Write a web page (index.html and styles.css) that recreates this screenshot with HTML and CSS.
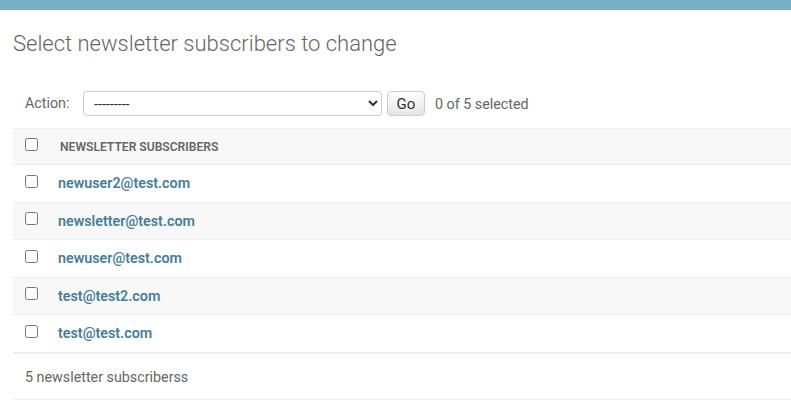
FILE: index.html
```html
<!DOCTYPE html>
<html>
<head>
<meta charset="utf-8">
<link rel="stylesheet" href="styles.css">
</head>
<body>
<div class="topbar"></div>
<div class="content">
  <h1 class="title">Select newsletter subscribers to change</h1>
  <div class="actions">
    <label class="action-label">Action:</label>
    <select class="action-select">
      <option>---------</option>
    </select>
    <button class="go-btn">Go</button>
    <span class="counter">0 of 5 selected</span>
  </div>
  <table class="results">
    <thead>
      <tr>
        <th class="cb-col"><input type="checkbox"></th>
        <th class="head-text">Newsletter subscribers</th>
      </tr>
    </thead>
    <tbody>
      <tr><td class="cb-col"><input type="checkbox"></td><td class="link-cell"><a href="#">newuser2@test.com</a></td></tr>
      <tr><td class="cb-col"><input type="checkbox"></td><td class="link-cell"><a href="#">newsletter@test.com</a></td></tr>
      <tr><td class="cb-col"><input type="checkbox"></td><td class="link-cell"><a href="#">newuser@test.com</a></td></tr>
      <tr><td class="cb-col"><input type="checkbox"></td><td class="link-cell"><a href="#">test@test2.com</a></td></tr>
      <tr><td class="cb-col"><input type="checkbox"></td><td class="link-cell"><a href="#">test@test.com</a></td></tr>
    </tbody>
  </table>
  <p class="paginator">5 newsletter subscriberss</p>
</div>
</body>
</html>
```
FILE: styles.css
```css
html, body {
  margin: 0;
  padding: 0;
  background: #fff;
  font-family: Roboto, "Liberation Sans", sans-serif;
  color: #333;
  font-size: 14.3px;
}
.topbar {
  height: 10px;
  background: #79aec8;
}
.content {
  padding: 21px 0 0 13px;
}
.title {
  margin: 0 0 34px 0;
  font-size: 22px;
  line-height: 26px;
  font-weight: 300;
  color: #666;
}
.actions {
  display: flex;
  align-items: center;
  padding: 0 0 12px 12px;
  color: #666;
  font-size: 14.3px;
  line-height: 25px;
}
.action-label {
  width: 58px;
}
.action-select {
  width: 299px;
  height: 25px;
  border: 1px solid #ccc;
  border-radius: 4px;
  background: #fff;
  font-family: Roboto, "Liberation Sans", sans-serif;
  font-size: 14.3px;
  color: #333;
  padding: 0 0 0 6px;
  margin: 0;
}
.go-btn {
  margin: 0 0 0 5px;
  height: 25px;
  width: 38px;
  padding: 0;
  border: 1px solid #ccc;
  border-radius: 4px;
  background: #fff;
  box-shadow: 0 -15px 20px -10px rgba(0,0,0,0.15) inset;
  font-family: Roboto, "Liberation Sans", sans-serif;
  font-size: 15px;
  color: #333;
}
.counter {
  margin-left: 10px;
  line-height: 24px;
}
.results {
  width: 100%;
  border-collapse: collapse;
}
.results thead th {
  background: #f8f8f8;
  border-top: 1px solid #eee;
  border-bottom: 1px solid #eee;
  height: 34px;
  padding: 0;
  text-align: left;
  vertical-align: middle;
}
.head-text {
  font-size: 12.1px;
  font-weight: 600;
  text-transform: uppercase;
  color: #666;
}
.results thead th.head-text {
  padding-left: 10px;
  padding-top: 1px;
}
.cb-col {
  width: 37px;
  box-sizing: border-box;
}
.cb-col input {
  margin: 0 0 0 4px;
  width: 13px;
  height: 13px;
  display: block;
}
.results .cb-col {
  padding: 0 0 0 8px;
}
.results thead th.cb-col input {
  margin-top: -4px;
}
.results tbody td {
  border-bottom: 1px solid #eee;
  padding: 10px 8px;
  height: 16.5px;
  line-height: 16.5px;
  font-size: 14.3px;
  vertical-align: middle;
}
.results tbody td.cb-col {
  padding: 0 0 0 8px;
}
.results tbody td.cb-col input {
  margin-top: -4px;
}
.results tbody tr:nth-child(even) {
  background: #f8f8f8;
}
.link-cell a {
  color: #447e9b;
  font-weight: 600;
  text-decoration: none;
}
.paginator {
  margin: 0;
  border-top: 1px solid #eee;
  border-bottom: 1px solid #eee;
  padding: 12px 0 11px 12px;
  font-size: 14.3px;
  line-height: 22px;
  color: #666;
}
```
